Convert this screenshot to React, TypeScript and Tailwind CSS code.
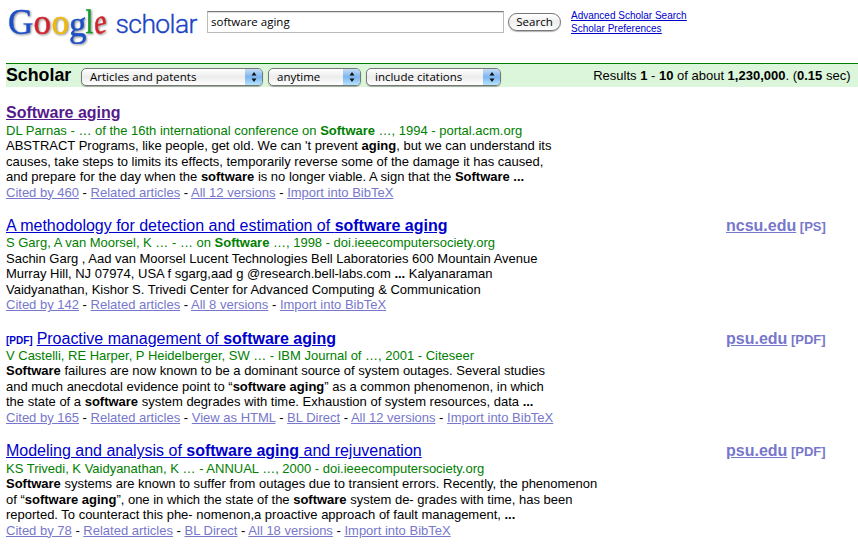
import type { ReactNode } from "react";

type Result = {
  tag?: string;
  title: ReactNode;
  titleClass?: string;
  meta: ReactNode;
  lines: ReactNode[];
  links: string[];
  source?: [string, string];
};

const results: Result[] = [
  {
    title: <b>Software aging</b>,
    titleClass: "text-[#551a8b]",
    meta: <>DL Parnas - … of the 16th international conference on <b>Software</b> …, 1994 - portal.acm.org</>,
    lines: [
      <>ABSTRACT Programs, like people, get old. We can 't prevent <b>aging</b>, but we can understand its</>,
      <>causes, take steps to limits its effects, temporarily reverse some of the damage it has caused,</>,
      <>and prepare for the day when the <b>software</b> is no longer viable. A sign that the <b>Software ...</b></>,
    ],
    links: ["Cited by 460", "Related articles", "All 12 versions", "Import into BibTeX"],
  },
  {
    title: <>A methodology for detection and estimation of <b>software aging</b></>,
    meta: <>S Garg, A van Moorsel, K … - … on <b>Software</b> …, 1998 - doi.ieeecomputersociety.org</>,
    lines: [
      <>Sachin Garg , Aad van Moorsel Lucent Technologies Bell Laboratories 600 Mountain Avenue</>,
      <>Murray Hill, NJ 07974, USA f sgarg,aad g @research.bell-labs.com <b>...</b> Kalyanaraman</>,
      <>Vaidyanathan, Kishor S. Trivedi Center for Advanced Computing &amp; Communication</>,
    ],
    links: ["Cited by 142", "Related articles", "All 8 versions", "Import into BibTeX"],
    source: ["ncsu.edu", "[PS]"],
  },
  {
    tag: "[PDF]",
    title: <>Proactive management of <b>software aging</b></>,
    meta: <>V Castelli, RE Harper, P Heidelberger, SW … - IBM Journal of …, 2001 - Citeseer</>,
    lines: [
      <><b>Software</b> failures are now known to be a dominant source of system outages. Several studies</>,
      <>and much anecdotal evidence point to “<b>software aging</b>” as a common phenomenon, in which</>,
      <>the state of a <b>software</b> system degrades with time. Exhaustion of system resources, data <b>...</b></>,
    ],
    links: ["Cited by 165", "Related articles", "View as HTML", "BL Direct", "All 12 versions", "Import into BibTeX"],
    source: ["psu.edu", "[PDF]"],
  },
  {
    title: <>Modeling and analysis of <b>software aging</b> and rejuvenation</>,
    meta: <>KS Trivedi, K Vaidyanathan, K … - ANNUAL …, 2000 - doi.ieeecomputersociety.org</>,
    lines: [
      <><b>Software</b> systems are known to suffer from outages due to transient errors. Recently, the phenomenon</>,
      <>of “<b>software aging</b>”, one in which the state of the <b>software</b> system de- grades with time, has been</>,
      <>reported. To counteract this phe- nomenon,a proactive approach of fault management, <b>...</b></>,
    ],
    links: ["Cited by 78", "Related articles", "BL Direct", "All 18 versions", "Import into BibTeX"],
    source: ["psu.edu", "[PDF]"],
  },
];

function Logo() {
  return (
    <svg width="200" height="52" viewBox="0 0 200 52" className="block shrink-0">
      <g fontFamily="'Liberation Serif', serif" fontSize="35" className="[filter:drop-shadow(1px_1px_1px_rgba(0,0,0,0.45))]" strokeWidth="0.4">
        <text x="8" y="34" fill="#1c4fc8" stroke="#1c4fc8">G</text>
        <text x="33.500" y="33.500" fill="#d3222a" stroke="#d3222a">o</text>
        <text x="51.500" y="33.500" fill="#efb90c" stroke="#efb90c">o</text>
        <text x="69" y="35.500" fill="#1c4fc8" stroke="#1c4fc8">g</text>
        <text x="0" y="0" fill="#169b2c" stroke="#169b2c" transform="translate(85.500 33.200) scale(0.8 0.98)">l</text>
        <text x="0" y="0" fill="#d3222a" stroke="#d3222a" fontSize="34" transform="translate(94.500 35) rotate(-16) skewX(-14) scale(0.85 1)">e</text>
      </g>
      <text x="115.500" y="33" fontFamily="Roboto, sans-serif" fontWeight="300" fontSize="26.500" textLength="82" fill="#1c44c4" stroke="#1c44c4" strokeWidth="0.35">scholar</text>
    </svg>
  );
}

function Select({ label, className }: { label: string; className: string }) {
  return (
    <button className={`flex h-[18px] overflow-hidden rounded-[5px] border border-[#777] bg-linear-to-b from-white via-[#ececec] to-white shadow-[0_1px_1px_rgba(0,0,0,0.3)] ${className}`}>
      <span className="flex-1 pl-2 text-left font-['Open_Sans','Noto_Sans',sans-serif] text-[11.500px] leading-[15px] whitespace-nowrap">{label}</span>
      <span className="flex h-full w-[17px] items-center justify-center bg-linear-to-b from-[#c5dcf6] via-[#7db5ef] to-[#b4e4ff]">
        <svg width="6" height="10" viewBox="0 0 6 10"><path d="M3 0 5.500 3.500H.5zM3 10 .5 6.500h5z" fill="#111" /></svg>
      </span>
    </button>
  );
}

function ResultItem({ r }: { r: Result }) {
  return (
    <article className="flex h-[112.700px] justify-between">
      <div className="whitespace-nowrap">
        <h3 className="h-[19.400px] text-[16px] leading-[19px] tracking-[-0.01px]">
          {r.tag && <b className="mr-1 text-[10px] text-[#0000cc]">{r.tag}</b>}
          <a className={`underline ${r.titleClass ?? "text-[#0000cc]"}`}>{r.title}</a>
        </h3>
        <p className="leading-[15.500px] tracking-[-0.008px] text-[#008000]">{r.meta}</p>
        {r.lines.map((l, i) => <p key={i} className="leading-[15.500px] tracking-[-0.008px]">{l}</p>)}
        <p className="leading-[15.400px]">
          {r.links.map((l, i) => (
            <span key={l}>{i > 0 && " - "}<a className="text-[#7777cc] underline">{l}</a></span>
          ))}
        </p>
      </div>
      {r.source && (
        <div className="w-[132px] text-[#7777cc]">
          <a className="text-[16px] leading-[19px] font-bold underline">{r.source[0]}</a>{" "}
          <b className="text-[13px]">{r.source[1]}</b>
        </div>
      )}
    </article>
  );
}

export default function App() {
  return (
    <main className="h-[548px] w-[858px] overflow-hidden bg-white font-['Liberation_Sans',Arial,sans-serif] text-[13px] text-black">
      <header className="flex h-[63px]">
        <Logo />
        <input readOnly value="software aging" className="mt-[11px] ml-[7px] h-[22px] w-[297px] border border-[#bbb] border-t-[#777] pb-[2px] pl-[3px] font-['Open_Sans','Noto_Sans',sans-serif] text-[11.500px] shadow-[inset_0_1px_1px_#ddd] outline-none" />
        <button className="mt-[13px] ml-[4px] h-[18px] w-[53px] rounded-full border border-[#777] bg-linear-to-b from-white via-[#eee] to-white font-['Open_Sans','Noto_Sans',sans-serif] text-[11.500px] leading-[16px] shadow-[0_1px_1px_rgba(0,0,0,0.3)]">Search</button>
        <nav className="mt-[9px] ml-[10px] flex flex-col text-[10px] leading-[13px] text-[#0000cc] underline">
          <a>Advanced Scholar Search</a>
          <a>Scholar Preferences</a>
        </nav>
      </header>
      <section className="ml-[6px] flex h-[24px] border-t border-[#008000] bg-[#dcf6db]">
        <h1 className="w-[75px] text-[17.800px] leading-[22px] font-bold">Scholar</h1>
        <div className="flex gap-[5px] pt-[4px]">
          <Select label="Articles and patents" className="w-[182px]" />
          <Select label="anytime" className="w-[93px]" />
          <Select label="include citations" className="w-[135px]" />
        </div>
        <p className="mr-[7.500px] ml-auto leading-[24px] whitespace-nowrap">Results <b>1</b> - <b>10</b> of about <b>1,230,000</b>. (<b>0.15</b> sec)</p>
      </section>
      <div className="pt-[16.200px] pl-[6px]">
        {results.map((r, i) => <ResultItem key={i} r={r} />)}
      </div>
    </main>
  );
}
